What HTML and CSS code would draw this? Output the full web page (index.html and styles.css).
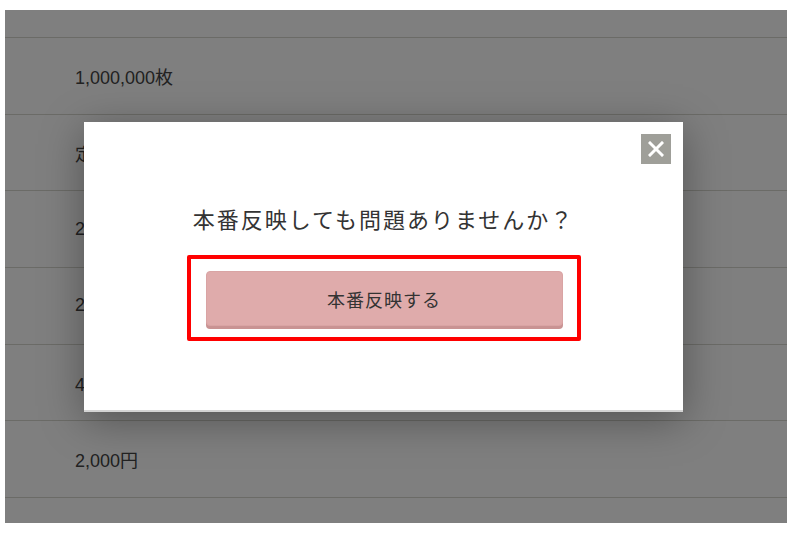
FILE: index.html
```html
<!DOCTYPE html>
<html lang="ja">
<head>
    <meta charset="UTF-8">
    <meta name="viewport" content="width=device-width, initial-scale=1.0">
    <title>本番反映</title>
    <link rel="stylesheet" href="styles.css">
</head>
<body>
    <div class="screen">
        <div class="rows">
            <div class="row row-top"></div>
            <div class="row">1,000,000枚</div>
            <div class="row">定期購入</div>
            <div class="row">2023/04/01</div>
            <div class="row">2023/04/30</div>
            <div class="row">400枚</div>
            <div class="row">2,000円</div>
            <div class="row"></div>
        </div>

        <div class="overlay"></div>

        <div class="modal">
            <button class="modal-close" aria-label="閉じる">
                <svg width="16" height="16" viewBox="0 0 16 16">
                    <path d="M2 2 L14 14 M14 2 L2 14" stroke="#fff" stroke-width="3" stroke-linecap="square"/>
                </svg>
            </button>
            <p class="modal-title">本番反映しても問題ありませんか？</p>
            <div class="highlight">
                <button class="btn-deploy">本番反映する</button>
            </div>
        </div>
    </div>
</body>
</html>
```

FILE: styles.css
```css
body {
    margin: 0;
    background-color: #fff;
    font-family: 'Liberation Sans', 'Noto Sans CJK JP', sans-serif;
}

.screen {
    position: relative;
    width: 782px;
    height: 513px;
    margin: 10px 0 0 5px;
    overflow: hidden;
    background-color: #fff;
}

.rows {
    display: flex;
    flex-direction: column;
}

.row {
    height: 75.7px;
    flex-shrink: 0;
    display: flex;
    align-items: center;
    padding-left: 70px;
    border-bottom: 1px solid #d6d6ce;
    font-size: 18px;
    color: #444;
}

.row-top {
    height: 27px;
}

.overlay {
    position: absolute;
    inset: 0;
    background-color: rgba(0, 0, 0, 0.5);
}

.modal {
    position: absolute;
    top: 112px;
    left: 79px;
    width: 599px;
    height: 290px;
    box-sizing: border-box;
    background-color: #fff;
    border-bottom: 2px solid #d4d4d4;
    box-shadow: 0 8px 40px rgba(0, 0, 0, 0.35);
    display: flex;
    flex-direction: column;
    align-items: center;
}

.modal-close {
    position: absolute;
    top: 12px;
    right: 12px;
    width: 30px;
    height: 30px;
    padding: 0;
    border: none;
    background-color: #9f9f99;
    display: flex;
    align-items: center;
    justify-content: center;
    cursor: pointer;
}

.modal-title {
    margin: 81px 0 0;
    line-height: 30px;
    font-size: 22px;
    letter-spacing: 2px;
    color: #333;
    font-family: 'Noto Sans CJK JP', sans-serif;
}

.highlight {
    margin-top: 22px;
    width: 394px;
    box-sizing: border-box;
    border: 4px solid #ff0000;
    border-radius: 2px;
    padding: 12px 14px 11px 15px;
}

.btn-deploy {
    display: block;
    width: 100%;
    height: 55px;
    border: 1px solid #d9a4a4;
    border-radius: 4px;
    background-color: #dfabab;
    box-shadow: 0 3px 0 #c99393;
    font-family: 'Noto Sans CJK JP', sans-serif;
    font-size: 18px;
    letter-spacing: 1px;
    color: #333;
    cursor: pointer;
}
```
